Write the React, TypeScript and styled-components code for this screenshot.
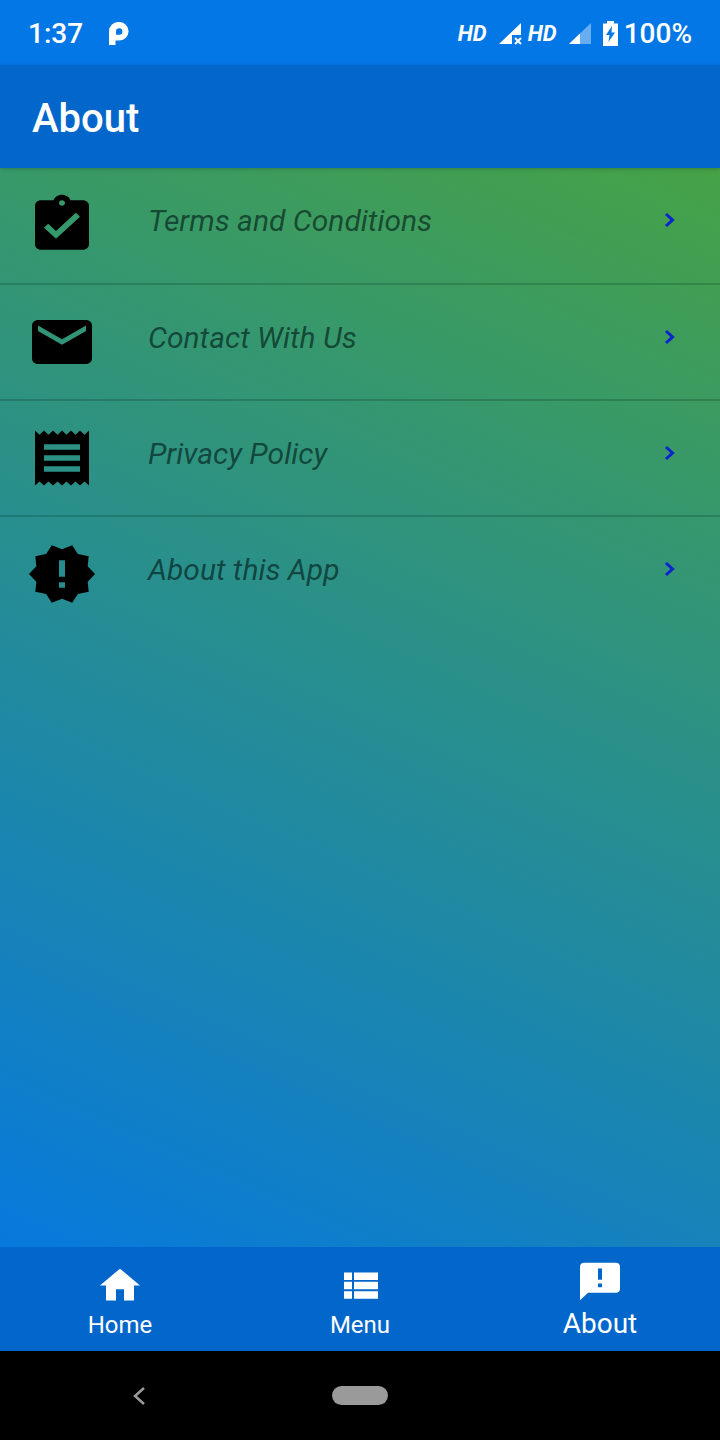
import React from 'react';
import styled, { createGlobalStyle, css } from 'styled-components';
import {
  MdAnnouncement,
  MdAssignmentTurnedIn,
  MdEmail,
  MdHome,
  MdNewReleases,
  MdReceipt,
} from 'react-icons/md';

const GlobalStyle = createGlobalStyle`
  *, *::before, *::after { box-sizing: border-box; }
  body { margin: 0; font-family: Roboto, "Liberation Sans", sans-serif; }
`;

const Screen = styled.div`
  display: flex;
  flex-direction: column;
  min-height: 100vh;
  background: #0366cb;
`;

const StatusBar = styled.div`
  display: flex;
  align-items: center;
  justify-content: space-between;
  height: 65px;
  padding: 2px 28px 0;
  background: #0477e6;
  color: #fff;
  font-size: 28px;
  font-weight: 500;
`;

const StatusGroup = styled.div<{ $gap: number }>`
  display: flex;
  align-items: center;
  gap: ${(p) => p.$gap}px;
`;

const HdLabel = styled.span`
  font-size: 22px;
  font-weight: 700;
  font-style: italic;
`;

const SignalSlot = styled.span`
  display: flex;
  gap: 6px;
  align-items: center;
`;

const AppBar = styled.header`
  position: relative;
  display: flex;
  align-items: center;
  height: 103px;
  padding: 4px 32px 0;
  background: #0366cb;
  color: #fff;
  box-shadow: 0 1px 4px rgba(0, 0, 0, 0.2);
`;

const Title = styled.h1`
  margin: 0;
  font-size: 40px;
  font-weight: 500;
`;

const Content = styled.main`
  flex: 1;
  background: linear-gradient(204deg, #46a246 0%, #0779dd 100%);
`;

const List = styled.ul`
  margin: 0;
  padding: 0;
  list-style: none;
`;

const Item = styled.li`
  border-bottom: 2px solid rgba(0, 0, 0, 0.16);
  &:last-child { border-bottom: 0; }
`;

const RowLink = styled.a`
  display: flex;
  align-items: flex-start;
  height: 115px;
  padding: 24px 38px 0 26px;
  color: rgba(0, 20, 20, 0.62);
  text-decoration: none;
  ${Item} + ${Item} & {
    height: 114px;
  }
`;

const RowIcon = styled.span`
  display: flex;
  color: #000;
  svg { width: 72px; height: 66px; }
`;

const RowLabel = styled.span`
  flex: 1;
  margin-left: 50px;
  padding-top: 12px;
  font-size: 30px;
  line-height: 34px;
  font-style: italic;
`;

const Chevron = styled.svg`
  width: 26px;
  height: 24px;
  margin-top: 16px;
  fill: none;
  stroke: #0a22d0;
  stroke-width: 3;
`;

const TabBar = styled.nav`
  display: grid;
  grid-template-columns: repeat(3, 1fr);
  height: 104px;
  background: #0366cb;
`;

const Tab = styled.a<{ $active?: boolean }>`
  display: flex;
  flex-direction: column;
  align-items: center;
  padding-top: 16px;
  color: #fff;
  font-size: 24px;
  line-height: 34px;
  text-decoration: none;
  svg { width: 48px; height: 45px; }
  ${(p) =>
    p.$active &&
    css`
      padding-top: 12px;
      font-size: 28px;
      line-height: 40px;
    `}
`;

const SystemBar = styled.div`
  display: grid;
  grid-template-columns: 1fr 56px 1fr;
  align-items: center;
  height: 89px;
  background: #000;
`;

const BackButton = styled.button`
  display: flex;
  justify-self: center;
  margin-right: 54px;
  padding: 0;
  border: 0;
  background: none;
`;

const HomePill = styled.button`
  height: 19px;
  padding: 0;
  border: 0;
  border-radius: 10px;
  background: #9a9a9a;
`;

type Icon = React.ComponentType<React.SVGProps<SVGSVGElement>>;

function ViewListIcon(props: React.SVGProps<SVGSVGElement>) {
  return (
    <svg viewBox="0 0 24 24" fill="currentColor" {...props}>
      <path d="M4 14h4v-4H4v4zm0 5h4v-4H4v4zM4 9h4V5H4v4zm5 5h12v-4H9v4zm0 5h12v-4H9v4zM9 5v4h12V5H9z" />
    </svg>
  );
}

const rows: { label: string; Icon: Icon }[] = [
  { label: 'Terms and Conditions', Icon: MdAssignmentTurnedIn as Icon },
  { label: 'Contact With Us', Icon: MdEmail as Icon },
  { label: 'Privacy Policy', Icon: MdReceipt as Icon },
  { label: 'About this App', Icon: MdNewReleases as Icon },
];

const tabs: { label: string; Icon: Icon; active?: boolean }[] = [
  { label: 'Home', Icon: MdHome as Icon },
  { label: 'Menu', Icon: ViewListIcon },
  { label: 'About', Icon: MdAnnouncement as Icon, active: true },
];

export default function App() {
  return (
    <Screen>
      <GlobalStyle />
      <StatusBar>
        <StatusGroup $gap={26}>
          <span>1:37</span>
          <svg width="20" height="24" viewBox="0 0 20 24" aria-hidden="true">
            <path
              fill="#fff"
              fillRule="evenodd"
              d="M0 23V9.500A9.800 9.300 0 1 1 10 18.500H6.500V23ZM7 12.500V9.500A3.200 3.200 0 1 1 10.200 12.700H7Z"
            />
          </svg>
        </StatusGroup>
        <StatusGroup $gap={12}>
          <HdLabel>HD</HdLabel>
          <SignalSlot>
            <svg width="23" height="22" viewBox="0 0 23 22" aria-hidden="true">
              <path fill="#fff" d="M0 21L22 0V12H13V21Z" />
              <path stroke="#fff" strokeWidth="2" d="M16 15l6 6M22 15l-6 6" />
            </svg>
            <HdLabel>HD</HdLabel>
          </SignalSlot>
          <svg width="22" height="22" viewBox="0 0 22 22" aria-hidden="true">
            <path fill="#fff" fillOpacity="0.4" d="M0 21L22 0V21Z" />
            <path fill="#fff" d="M0 21L11 10.500V21Z" />
          </svg>
          <SignalSlot>
            <svg width="15" height="25" viewBox="0 0 15 25" aria-hidden="true">
              <path fill="#fff" d="M4 0h7v2.500h4V25H0V2.500h4Z" />
              <path fill="#0477e6" d="M9 5L3 14h3.500L5.500 21L12 11.500H8.500Z" />
            </svg>
            <span>100%</span>
          </SignalSlot>
        </StatusGroup>
      </StatusBar>
      <AppBar>
        <Title>About</Title>
      </AppBar>
      <Content>
        <List>
          {rows.map(({ label, Icon }) => (
            <Item key={label}>
              <RowLink href="#">
                <RowIcon>
                  <Icon preserveAspectRatio="none" aria-hidden="true" />
                </RowIcon>
                <RowLabel>{label}</RowLabel>
                <Chevron viewBox="0 0 26 24" aria-hidden="true">
                  <path d="M10 6l6.500 6-6.500 6" />
                </Chevron>
              </RowLink>
            </Item>
          ))}
        </List>
      </Content>
      <TabBar>
        {tabs.map(({ label, Icon, active }) => (
          <Tab key={label} href="#" $active={active} aria-current={active ? 'page' : undefined}>
            <Icon preserveAspectRatio="none" aria-hidden="true" />
            <span>{label}</span>
          </Tab>
        ))}
      </TabBar>
      <SystemBar>
        <BackButton aria-label="Back">
          <svg width="14" height="20" viewBox="0 0 14 20" fill="none" stroke="#9a9a9a" strokeWidth="2.500" aria-hidden="true">
            <path d="M12 2L3 10l9 8" />
          </svg>
        </BackButton>
        <HomePill aria-label="Home screen" />
      </SystemBar>
    </Screen>
  );
}
